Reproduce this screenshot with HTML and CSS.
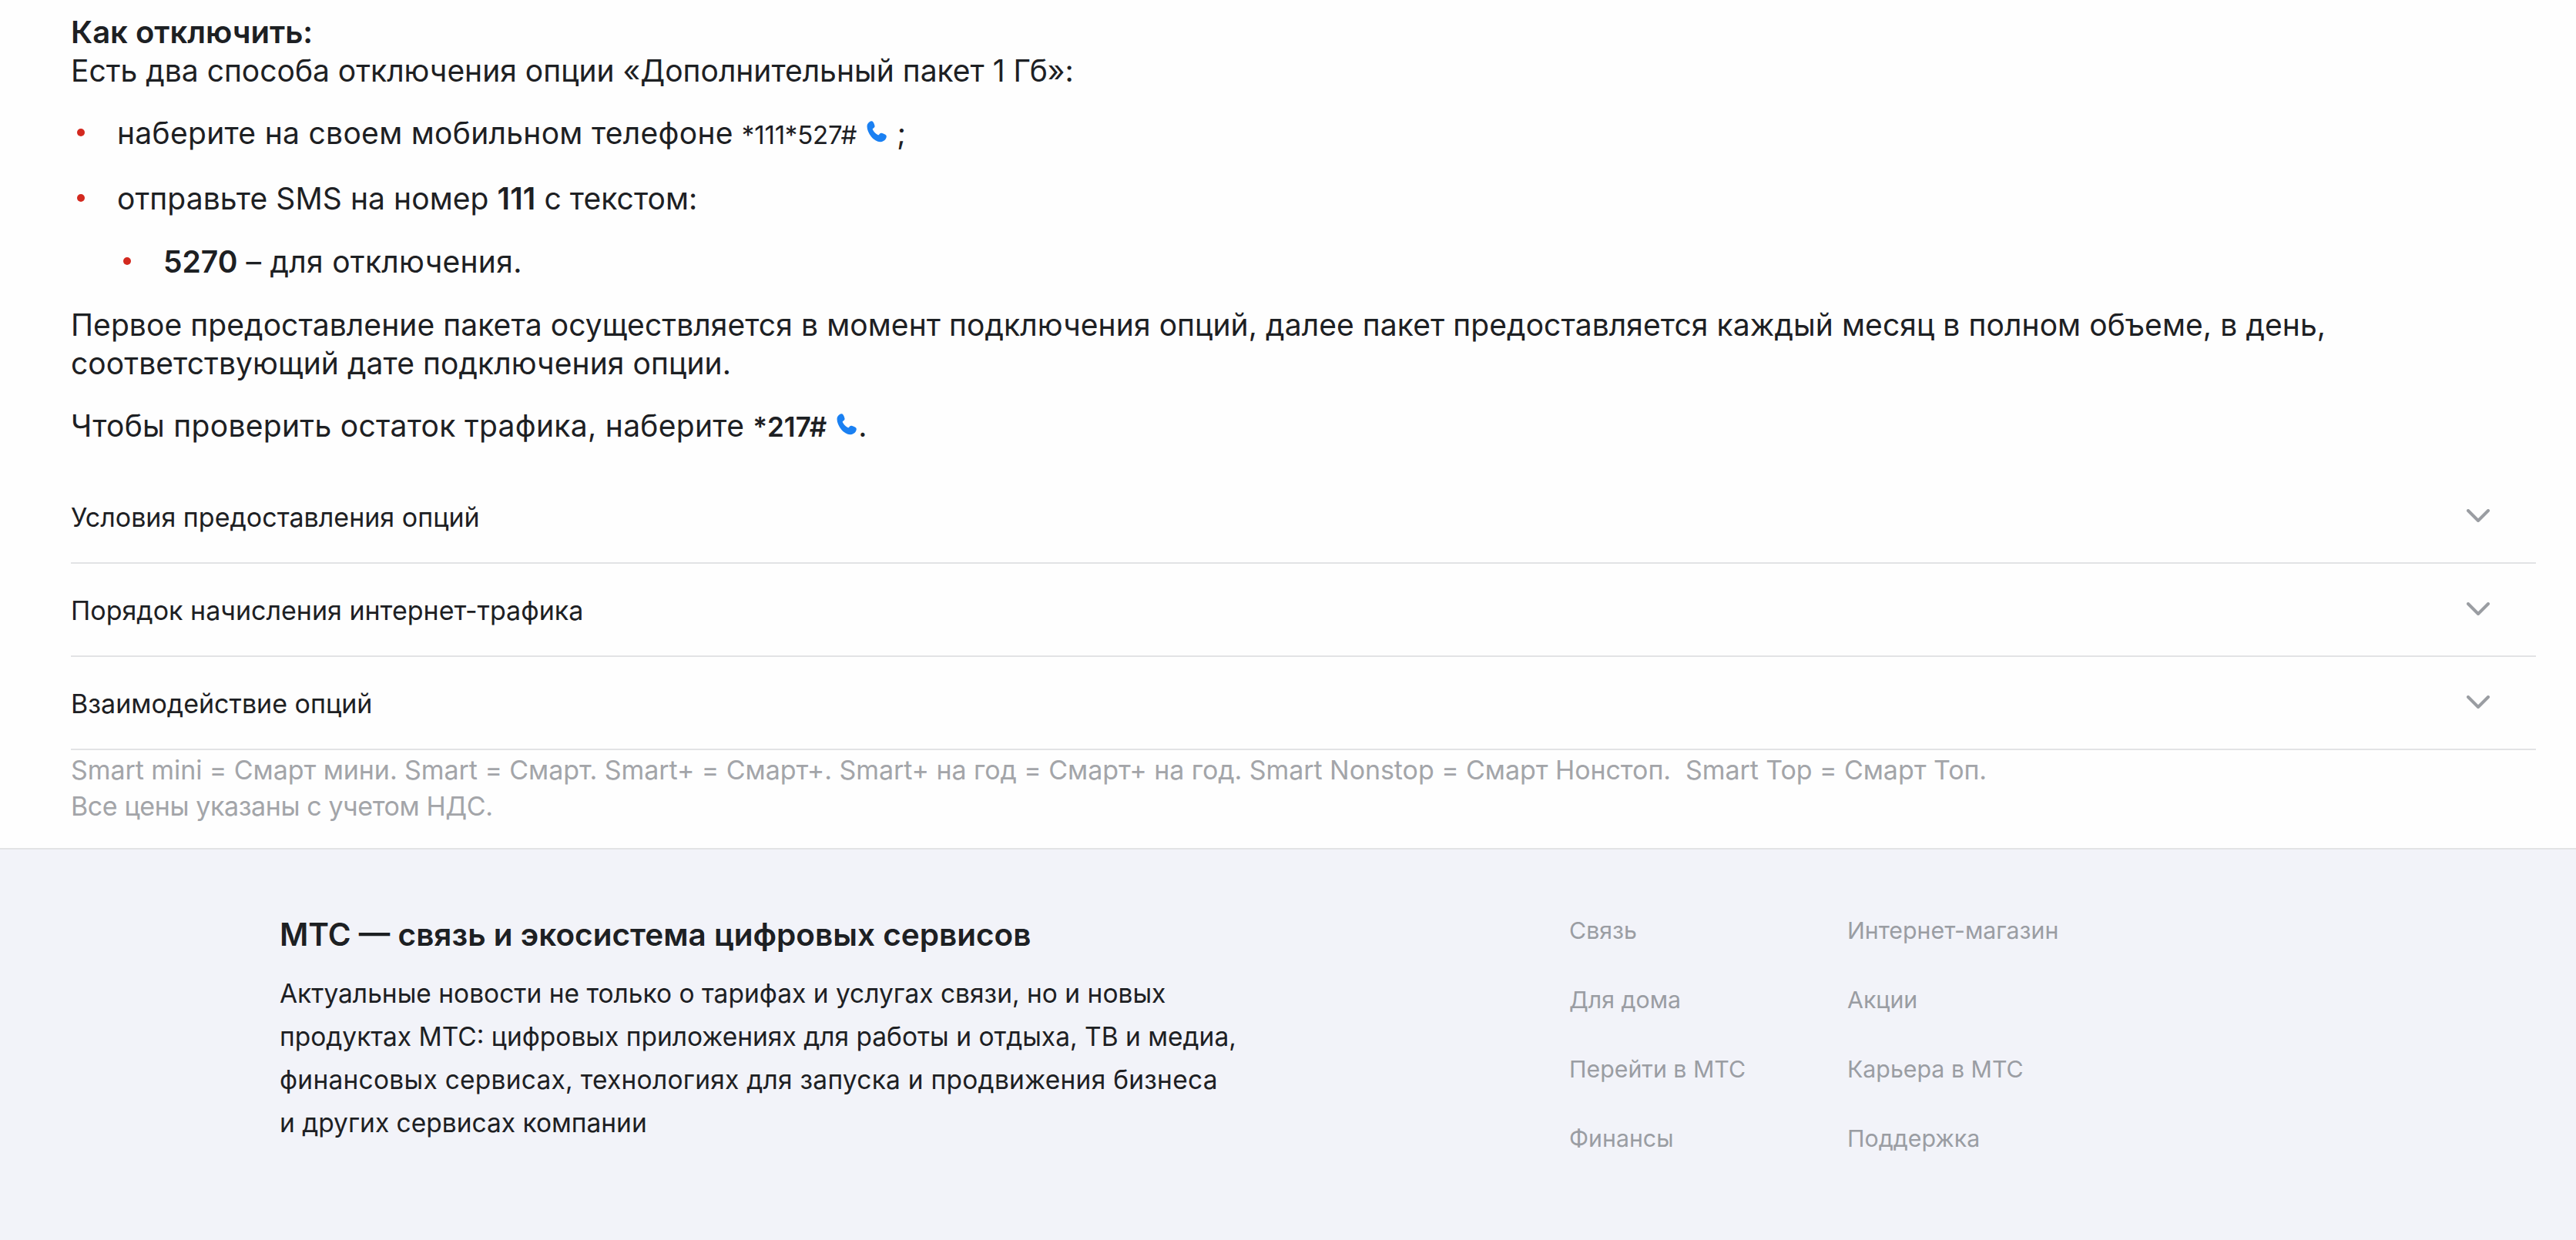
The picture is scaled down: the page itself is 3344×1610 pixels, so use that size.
FILE: index.html
```html
<!DOCTYPE html>
<html lang="ru">
<head>
    <meta charset="UTF-8">
    <title>МТС - Дополнительный пакет 1 Гб</title>
    <link rel="stylesheet" href="styles.css">
</head>
<body>
    <main class="content">
        <p class="lead"><b>Как отключить:</b><br>Есть два способа отключения опции «Дополнительный пакет 1 Гб»:</p>
        <ul class="list">
            <li><div><span class="wide">наберите на своем мобильном телефоне</span> <span class="code">*111*527#</span> <svg class="phone" viewBox="0 0 28 28"><path d="M1 4.5C2.5 1.5 5.5-.5 7.5.5c1.5.8 2.5 4 3 6 .3 1.3-.8 2.3-2.2 3.2-.6.4-.7 1-.3 1.7 1.5 2.7 3.6 5 6.4 6.6.7.4 1.3.3 1.7-.3 1-1.3 2-2.3 3.3-2 2 .5 5 1.600 6 3 1.200 1.800-.5 5.800-3.500 7.300C17 29 10.500 26 6 20.500 1.800 15.500-.5 8.500 1 4.500Z"/></svg> ;</div></li>
            <li>
                <div><span class="slight">отправьте SMS на номер <b>111</b> с текстом:</span>
                    <ul class="list sub">
                        <li><div><b>5270</b> <span class="wide">– для отключения.</span></div></li>
                    </ul>
                </div>
            </li>
        </ul>
        <p class="para slight">Первое предоставление пакета осуществляется в момент подключения опций, далее пакет предоставляется каждый месяц в полном объеме, в день, соответствующий дате подключения опции.</p>
        <p class="para last"><span class="wide">Чтобы проверить остаток трафика, наберите</span> <b class="code-bold">*217#</b> <svg class="phone" viewBox="0 0 28 28"><path d="M1 4.5C2.5 1.5 5.5-.5 7.5.5c1.5.8 2.5 4 3 6 .3 1.3-.8 2.3-2.2 3.2-.6.4-.7 1-.3 1.7 1.5 2.7 3.6 5 6.4 6.6.7.4 1.3.3 1.7-.3 1-1.3 2-2.3 3.3-2 2 .5 5 1.600 6 3 1.200 1.800-.5 5.800-3.500 7.300C17 29 10.500 26 6 20.500 1.800 15.500-.5 8.500 1 4.500Z"/></svg>.</p>

        <div class="accordion">
            <div class="acc-row">
                <span>Условия предоставления опций</span>
                <svg class="chevron" viewBox="0 0 30 17"><path d="M2 2l13 13L28 2"/></svg>
            </div>
            <div class="acc-row">
                <span>Порядок начисления интернет-трафика</span>
                <svg class="chevron" viewBox="0 0 30 17"><path d="M2 2l13 13L28 2"/></svg>
            </div>
            <div class="acc-row">
                <span>Взаимодействие опций</span>
                <svg class="chevron" viewBox="0 0 30 17"><path d="M2 2l13 13L28 2"/></svg>
            </div>
        </div>

        <p class="note"><span class="note-first">Smart mini = Смарт мини. Smart = Смарт. Smart+ = Смарт+. Smart+ на год = Смарт+ на год. Smart Nonstop = Смарт Нонстоп.&nbsp; Smart Top = Смарт Топ.</span><br><span class="note-second">Все цены указаны с учетом НДС.</span></p>
    </main>

    <footer class="footer">
        <div class="about">
            <h2>МТС — связь и экосистема цифровых сервисов</h2>
            <p>Актуальные новости не только о тарифах и услугах связи, но и новых<br>продуктах МТС: цифровых приложениях для работы и отдыха, ТВ и медиа,<br><span class="about-wide">финансовых сервисах, технологиях для запуска и продвижения бизнеса</span><br>и других сервисах компании</p>
        </div>
        <nav class="links">
            <a>Связь</a>
            <a>Интернет-магазин</a>
            <a>Для дома</a>
            <a>Акции</a>
            <a>Перейти в МТС</a>
            <a>Карьера в МТС</a>
            <a>Финансы</a>
            <a>Поддержка</a>
        </nav>
    </footer>
</body>
</html>
```

FILE: styles.css
```css
html, body {
    margin: 0;
    height: 100%;
}
body {
    font-family: Inter, "Noto Sans", sans-serif;
    color: #1d2023;
    background: #fefefe;
    display: flex;
    flex-direction: column;
    overflow: hidden;
}
p {
    margin: 0;
}
b {
    font-weight: 600;
}
.content {
    padding: 17px 52px 0 92px;
    font-size: 39px;
    line-height: 50px;
}
.lead b {
    font-size: 40px;
}
.wide {
    letter-spacing: .3px;
}
.slight {
    letter-spacing: .08px;
}
.list {
    list-style: none;
    margin: 31px 0 0;
    padding: 0;
}
.list li {
    display: flex;
    margin-top: 33px;
}
.list li:first-child {
    margin-top: 0;
}
.list li::before {
    content: "";
    flex: none;
    width: 10px;
    height: 10px;
    margin: 19px 42px 0 8px;
    border-radius: 50%;
    background: #d3291f;
}
.list.sub {
    margin-top: 32px;
}
.code {
    font-size: 33px;
    letter-spacing: -.2px;
}
.code-bold {
    font-size: 35px;
}
.phone {
    width: 28px;
    height: 28px;
    margin-left: 2px;
    fill: #1a80f2;
    vertical-align: 2px;
}
.para {
    margin-top: 32px;
}
.para.last {
    margin-top: 31px;
}
.accordion {
    margin-top: 32px;
    font-size: 34px;
}
.acc-row {
    display: flex;
    align-items: center;
    justify-content: space-between;
    height: 121px;
    border-bottom: 2px solid #e2e3e5;
    padding: 3px 60px 0 0;
    box-sizing: border-box;
}
.chevron {
    width: 30px;
    height: 17px;
    fill: none;
    stroke: #9a9da2;
    stroke-width: 4;
    stroke-linecap: round;
    stroke-linejoin: round;
    margin-top: -6px;
}
.note {
    margin-top: 2px;
    font-size: 34px;
    line-height: 47px;
    color: #a3a5a9;
}
.note-first {
    letter-spacing: -.07px;
}
.note-second {
    letter-spacing: -.4px;
}
.footer {
    flex: 1;
    margin-top: 31px;
    padding: 81px 0 0 363px;
    background: #f2f3f9;
    border-top: 2px solid #e2e3e5;
    display: flex;
}
.about {
    width: 1674px;
    flex: none;
}
.about h2 {
    margin: 0;
    font-size: 40.500px;
    line-height: 60px;
    font-weight: 600;
}
.about p {
    margin-top: 18px;
    font-size: 33.500px;
    line-height: 56px;
}
.about-wide {
    letter-spacing: .25px;
}
.links {
    display: grid;
    grid-template-columns: 361px auto;
    grid-auto-rows: 90px;
    align-content: start;
    margin-top: 1px;
    font-size: 30.300px;
    line-height: 46px;
    color: #9a9da3;
}
```
